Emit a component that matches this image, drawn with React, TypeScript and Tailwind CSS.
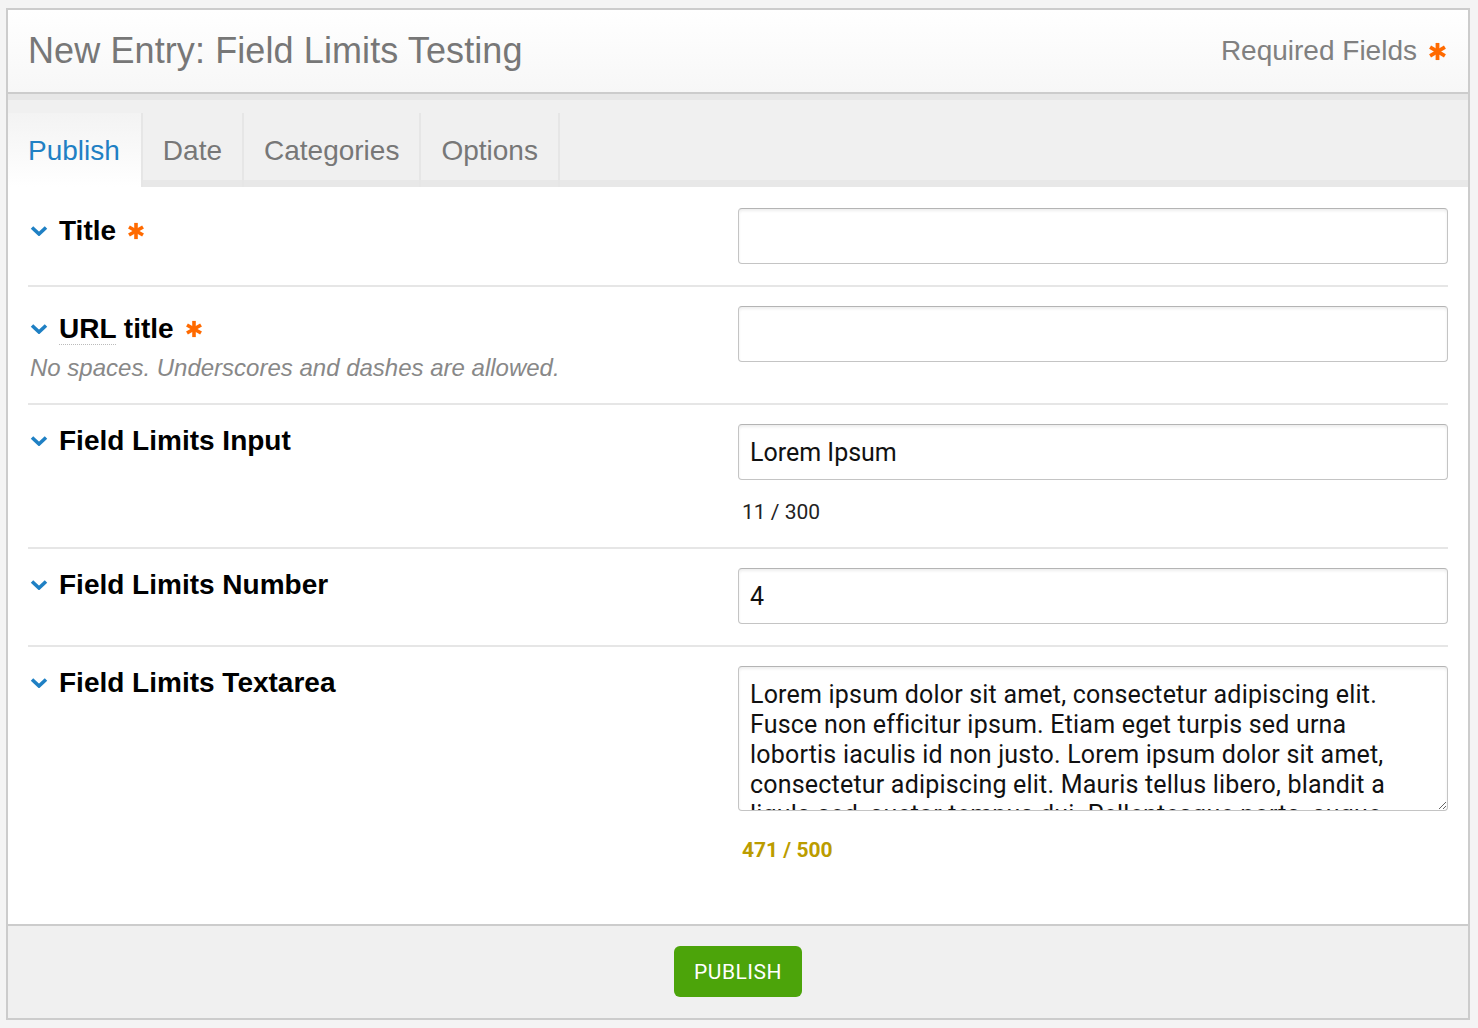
import React from "react"

const Asterisk = ({ className = "" }: { className?: string }) => (
  <svg viewBox="0 0 20 20" className={className} fill="none" stroke="currentColor" strokeWidth={4}>
    <line x1="10" y1="1" x2="10" y2="19" />
    <line x1="2.2" y1="5.5" x2="17.8" y2="14.5" />
    <line x1="2.2" y1="14.5" x2="17.8" y2="5.5" />
  </svg>
)

const Chevron = () => (
  <svg viewBox="0 0 18 10" className="w-[18px] h-[10px] text-[#1f80c4] shrink-0">
    <path d="M2 1.5 L9 8 L16 1.5" stroke="currentColor" strokeWidth={3.6} fill="none" />
  </svg>
)

const sans = "font-['Liberation_Sans',Arial,sans-serif]"
const ui = "font-['Roboto','Liberation_Sans',sans-serif]"

type RowProps = {
  label: string
  required?: boolean
  dotted?: boolean
  hint?: string
  className: string
  children: React.ReactNode
}

const Row = ({ label, required, dotted, hint, className, children }: RowProps) => (
  <div className={`grid grid-cols-2 ${className}`}>
    {/* Label side */}
    <div>
      <div className={`flex items-center ${required ? "mt-[9px]" : "mt-[3px]"}`}>
        <span className="w-[31px] flex pl-[2px]">
          <Chevron />
        </span>
        <span className={`${sans} text-[28px] leading-[28px] font-bold text-black`}>
          {dotted ? (
            <>
              <span className="border-b border-dotted border-[#bbbbbb]">URL</span> title
            </>
          ) : (
            label
          )}
        </span>
        {required && <Asterisk className="w-[18px] h-[18px] ml-[11px] text-[#ff6a00]" />}
      </div>
      {hint && (
        <p className={`${sans} italic text-[24px] leading-[30px] text-[#888888] mt-[10px] pl-[2px]`}>{hint}</p>
      )}
    </div>
    {/* Field side */}
    <div>{children}</div>
  </div>
)

const inputCls = `${ui} w-full h-[56px] border border-[#c4c4c4] border-t-[#b4b4b4] rounded-[4px] px-[11px] text-[25px] text-[#111111] bg-white shadow-[inset_0_2px_3px_rgba(0,0,0,0.07)] outline-none`

const TEXT =
  "Lorem ipsum dolor sit amet, consectetur adipiscing elit. Fusce non efficitur ipsum. Etiam eget turpis sed urna lobortis iaculis id non justo. Lorem ipsum dolor sit amet, consectetur adipiscing elit. Mauris tellus libero, blandit a ligula sed, auctor tempus dui. Pellentesque porta, augue vitae pulvinar dictum, nibh massa tincidunt lorem, ac finibus nisl nisi sit amet nunc. Donec quis metus vel orci mattis luctus. Nam eget nibh sed mi blandit feugiat. Duis sit amet velit est."

export default function App() {
  return (
    <div className="h-screen bg-[#f4f4f4] pt-[8px] pl-[6px] pr-[8px]">
      <div className="border-2 border-[#cccccc] bg-white flex flex-col">
        {/* Header */}
        <div className="h-[84px] border-b-2 border-[#cccccc] bg-linear-to-b from-white to-[#f7f7f7] flex items-center justify-between pl-[20px] pr-[21px]">
          <h1 className={`${sans} text-[36px] text-[#777777] tracking-[0.1px]`}>New Entry: Field Limits Testing</h1>
          <div className="flex items-center">
            <span className={`${sans} text-[28px] text-[#808080]`}>Required Fields</span>
            <Asterisk className="w-[19px] h-[19px] ml-[11px] text-[#ff6a00]" />
          </div>
        </div>

        {/* Tabs */}
        <div className="bg-[#f0f0f0] pt-[19px] flex shadow-[inset_0_6px_0_#e7e7e7,inset_0_-7px_0_#e8e8e8]">
          <div className={`${sans} h-[74px] flex items-center pl-[20px] pr-[21px] pt-[2px] text-[28px] text-[#1f80c4] bg-linear-to-b from-[#f3f3f3] to-white`}>
            Publish
          </div>
          {["Date", "Categories", "Options"].map((t, i) => (
            <div
              key={t}
              className={`${sans} h-[74px] flex items-center pt-[2px] px-[20px] text-[28px] text-[#777777] border-l-2 border-[#e6e6e6] ${i === 2 ? "border-r-2" : ""}`}
            >
              {t}
            </div>
          ))}
        </div>

        {/* Fields */}
        <div className="pl-[20px] pr-[20px]">
          <Row label="Title" required className="pt-[21px] pb-[21px] border-b-2 border-[#e6e6e6]">
            <input className={inputCls} defaultValue="" />
          </Row>
          <Row
            label="URL title"
            required
            dotted
            hint="No spaces. Underscores and dashes are allowed."
            className="pt-[19px] pb-[20px] border-b-2 border-[#e6e6e6]"
          >
            <input className={inputCls} defaultValue="" />
          </Row>
          <Row label="Field Limits Input" className="pt-[19px] pb-[23px] border-b-2 border-[#e6e6e6]">
            <input className={inputCls} defaultValue="Lorem Ipsum" />
            <p className={`${ui} text-[21px] leading-[24px] text-[#222222] mt-[20px] pl-[4px]`}>11 / 300</p>
          </Row>
          <Row label="Field Limits Number" className="pt-[19px] pb-[21px] border-b-2 border-[#e6e6e6]">
            <input className={inputCls} defaultValue="4" />
          </Row>
          <Row label="Field Limits Textarea" className="pt-[19px] pb-[62px]">
            <textarea
              className={`${ui} block w-full h-[145px] border border-[#c4c4c4] border-t-[#b4b4b4] rounded-[4px] pl-[11px] pr-[20px] pt-[13px] text-[25px] leading-[30px] tracking-[0.2px] text-[#111111] bg-white shadow-[inset_0_2px_3px_rgba(0,0,0,0.07)] outline-none resize-y overflow-hidden`}
              defaultValue={TEXT}
            />
            <p className={`${ui} font-bold text-[21px] leading-[24px] text-[#bb9c00] mt-[27px] pl-[4px]`}>471 / 500</p>
          </Row>
        </div>

        {/* Footer */}
        <div className="border-t-2 border-[#cccccc] bg-[#f0f0f0] pt-[20px] pb-[21px] flex justify-center">
          <button className={`${ui} h-[51px] w-[128px] pt-[2px] rounded-[6px] bg-[#4ca40a] text-white text-[21px] tracking-[0.5px]`}>
            PUBLISH
          </button>
        </div>
      </div>
    </div>
  )
}
